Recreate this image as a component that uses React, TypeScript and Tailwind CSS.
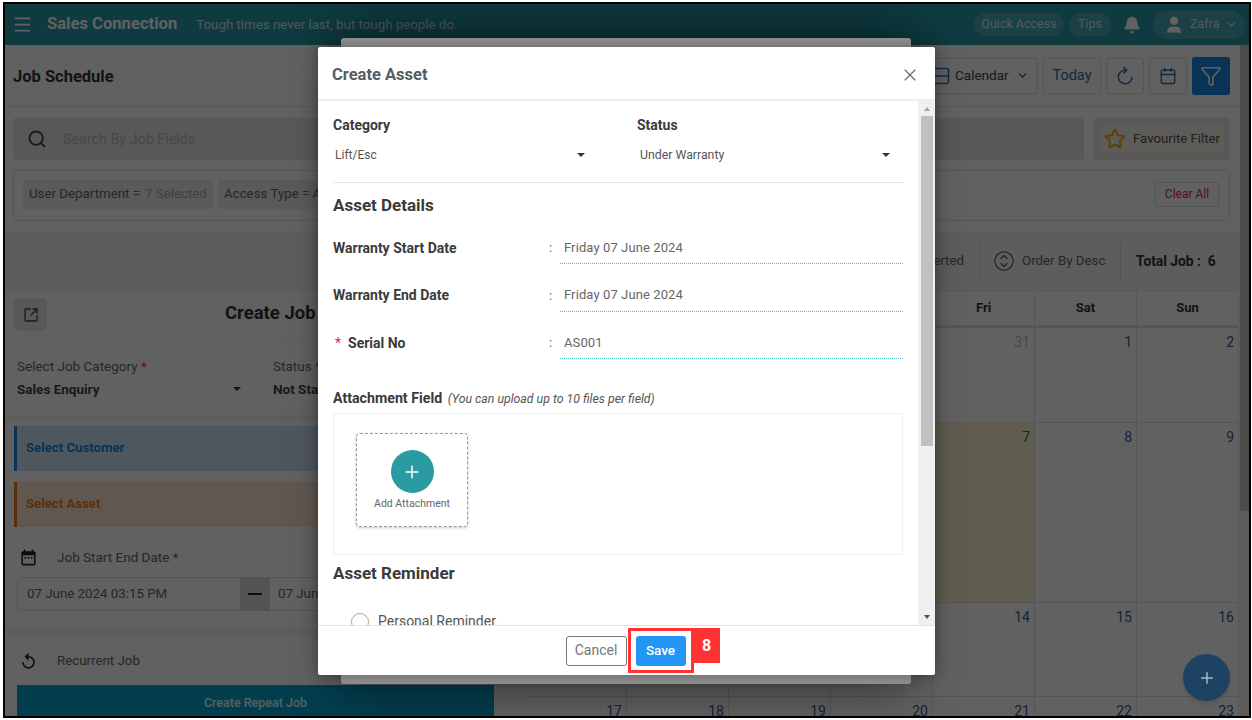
import { Bell, Calendar as CalendarIcon, ChevronDown, Filter, Menu, Plus, Rows2, Search, SquareArrowOutUpRight, Star, User, X } from 'lucide-react';

const font = { fontFamily: 'Roboto, "Liberation Sans", sans-serif' };

function Caret() {
  return <span className="w-0 h-0 border-x-[4px] border-x-transparent border-t-[4px] border-t-[#333]" />;
}

function DetailRow({ label, value, required }: { label: string; value: string; required?: boolean }) {
  return (
    <div className="flex h-[47.5px] items-start pt-[5px]">
      <div className="w-[216px] text-[14px] font-bold text-[#3a3a3a] flex items-center h-[24px] shrink-0">
        {required && <span className="text-[#e0245e] font-normal mr-[7px] ml-[2px]">*</span>}
        {label}
      </div>
      <div className="w-[11px] text-[#555] text-[13px] h-[24px] flex items-center shrink-0">:</div>
      <div className="flex-1 h-[28px] pl-[4px] pb-[4px] text-[13px] text-[#666] border-b border-dotted border-[#4fc0cc] flex items-center tracking-[0.1px]">{value}</div>
    </div>
  );
}

function CreateAssetModal() {
  return (
    <div className="absolute left-[318px] top-[47px] w-[617px] h-[628px] bg-white rounded-[2px] shadow-[0_0_14px_rgba(0,0,0,0.35)] flex flex-col">
      <div className="h-[54px] shrink-0 border-b-2 border-[#eee] flex items-center justify-between pl-[14px] pr-[15px] pt-[4px]">
        <span className="text-[16.5px] font-bold text-[#555c63]">Create Asset</span>
        <X size={20} strokeWidth={1.4} className="text-[#606a75]" />
      </div>
      <div className="flex-1 flex min-h-0">
        <div className="flex-1 min-w-0 overflow-hidden pl-[15px] pr-[15px]">
          <div className="h-[82px] border-b border-[#e5e5e5] grid grid-cols-2 gap-[0px]">
            <div className="pt-[15px] w-[252px]">
              <div className="text-[14px] font-bold text-[#3a3a3a] leading-[18px]">Category</div>
              <div className="mt-[12px] flex justify-between items-center pl-[2px] text-[12px] text-[#555]">
                Lift/Esc
                <Caret />
              </div>
            </div>
            <div className="pt-[15px] ml-[19px] w-[253px]">
              <div className="text-[14px] font-bold text-[#3a3a3a] leading-[18px]">Status</div>
              <div className="mt-[12px] flex justify-between items-center pl-[3px] text-[12.3px] text-[#555]">
                Under Warranty
                <Caret />
              </div>
            </div>
          </div>
          <div className="text-[17px] font-bold text-[#3a3a3a] mt-[11px] leading-[22px]">Asset Details</div>
          <div className="mt-[15px]">
            <DetailRow label="Warranty Start Date" value="Friday 07 June 2024" />
            <DetailRow label="Warranty End Date" value="Friday 07 June 2024" />
            <DetailRow label="Serial No" value="AS001" required />
          </div>
          <div className="mt-[15px] text-[14.2px] font-bold text-[#3a3a3a] leading-[18px]">
            Attachment Field <span className="text-[12.3px] italic font-normal text-[#555] ml-[2px]">(You can upload up to 10 files per field)</span>
          </div>
          <div className="mt-[5.5px] h-[142px] border border-[#eee] pt-[19px] pl-[22px]">
            <div className="w-[112px] h-[94px] border border-dashed border-[#999] rounded-[4px] shadow-[0_1px_3px_rgba(0,0,0,0.2)] flex flex-col items-center pt-[16px]">
              <div className="w-[43px] h-[43px] rounded-full bg-[#2a9aa3] flex items-center justify-center">
                <Plus size={20} strokeWidth={1.8} className="text-white" />
              </div>
              <div className="text-[10.5px] text-[#666] mt-[4px] leading-[14px]">Add Attachment</div>
            </div>
          </div>
          <div className="text-[17px] font-bold text-[#3a3a3a] mt-[7px] leading-[22px]">Asset Reminder</div>
          <div className="mt-[27px] flex items-center ml-[18px] gap-[9px]">
            <span className="w-[18px] h-[18px] rounded-full border border-[#aaa] shrink-0" />
            <span className="text-[14px] text-[#555]">Personal Reminder</span>
          </div>
        </div>
        <div className="w-[17px] shrink-0 bg-[#f0f0f0] flex flex-col items-center relative">
          <span className="mt-[6px] w-0 h-0 border-x-[3.5px] border-x-transparent border-b-[4px] border-b-[#a3a3a3]" />
          <div className="mt-[5px] w-[12px] h-[330px] bg-[#c0c0c0]" />
          <span className="absolute bottom-[6px] w-0 h-0 border-x-[3.5px] border-x-transparent border-t-[4px] border-t-[#505050]" />
        </div>
      </div>
      <div className="h-[50px] shrink-0 border-t border-[#e3e3e3] flex items-center justify-center gap-[9px] pr-[2px]">
        <button className="w-[61px] h-[30px] rounded-[3px] border border-[#777] text-[14px] text-[#777] bg-white">Cancel</button>
        <button className="w-[50px] h-[30px] rounded-[3px] bg-[#2196f3] text-[13.5px] font-medium text-white">Save</button>
      </div>
      {/* annotation on the screenshot */}
      <div className="absolute left-[310px] top-[581px] w-[66px] h-[45px] border-[3px] border-[#ff3333]" />
      <div className="absolute left-[375px] top-[581px] w-[27px] h-[35px] bg-[#ff3333] text-white font-bold text-[16px] flex items-center justify-center">8</div>
    </div>
  );
}

function Toolbar() {
  return (
    <div className="h-[62px] shrink-0 border-b border-[#e6e6e6] flex items-center pl-[8px] pr-[10px] justify-between">
      <span className="text-[16.5px] font-bold text-[#333] pt-[3px]">Job Schedule</span>
      <div className="flex items-center gap-[5px]">
        <div className="h-[36px] w-[108px] rounded-[3px] border border-[#ddd] flex items-center gap-[4px] text-[13.5px] text-[#444]">
          <Rows2 size={20} strokeWidth={1.8} className="text-[#2b6cb0]" />
          <span>Calendar</span>
          <ChevronDown size={13} className="ml-[3px]" />
        </div>
        <div className="h-[36px] w-[58px] rounded-[3px] border border-[#ddd] flex items-center justify-center text-[14.5px] text-[#2b6cb0]">Today</div>
        <div className="h-[36px] w-[38px] rounded-[3px] border border-[#ddd] flex items-center justify-center text-[#2b6cb0]">
          <svg width="20" height="20" viewBox="0 0 24 24" fill="none" stroke="currentColor" strokeWidth="1.8" strokeLinecap="round" strokeLinejoin="round">
            <path d="M13 5a8.2 8.2 0 1 0 7.4 8.5" />
            <path d="M10.5 1.5 14 5l-3.5 3.5" />
          </svg>
        </div>
        <div className="h-[36px] w-[38px] rounded-[3px] border border-[#ddd] flex items-center justify-center text-[#2b6cb0]"><CalendarIcon size={18} strokeWidth={1.8} /></div>
        <div className="h-[38px] w-[38px] rounded-[3px] bg-[#1583e3] flex items-center justify-center text-white"><Filter size={22} strokeWidth={1.8} /></div>
      </div>
    </div>
  );
}

function JobForm() {
  return (
    <div className="w-[505px] shrink-0 h-full">
      <div className="h-[49px] border-b border-[#eee] flex items-start pt-[7px] pl-[9px] relative">
        <div className="w-[33px] h-[33px] rounded-[5px] bg-[#e6e6e6] flex items-center justify-center text-[#444]"><SquareArrowOutUpRight size={16} /></div>
        <span className="absolute left-[220px] top-[9px] text-[18.5px] font-bold text-[#333]">Create Job</span>
      </div>
      <div className="h-[81px] border-b-[6px] border-[#f3f3f3] flex pl-[12px] pt-[16px]">
        <div className="w-[256px]">
          <div className="text-[13.5px] text-[#666] leading-[20px]">Select Job Category <span className="text-[#e53935]">*</span></div>
          <div className="flex items-center justify-between w-[224px] text-[13.5px] font-bold text-[#444] mt-[3px]">
            Sales Enquiry <Caret />
          </div>
        </div>
        <div>
          <div className="text-[13.5px] text-[#666] leading-[20px]">Status <span className="text-[#e53935]">*</span></div>
          <div className="text-[13.5px] font-bold text-[#444] mt-[3px]">Not Started</div>
        </div>
      </div>
      <div className="pl-[9px] pr-[11px] pt-[5px]">
        <div className="h-[45px] border-l-[3px] border-[#1583e3] bg-[#cfe4f7] flex items-center pl-[9px] pb-[2px] text-[13.2px] font-bold text-[#1a86d9]">Select Customer</div>
        <div className="h-[45px] mt-[11px] border-l-[3px] border-[#f07a1c] bg-[#fbe6d3] flex items-center pl-[9px] pb-[2px] text-[13.2px] font-bold text-[#ee7a1a]">Select Asset</div>
      </div>
      <div className="mt-[18px] pl-[14px] flex items-center gap-[19px] h-[24px] text-[13.5px] text-[#666]">
        <svg width="19" height="19" viewBox="0 0 24 24" fill="#222">
          <path d="M19 4h-1V2h-2v2H8V2H6v2H5c-1.1 0-2 .9-2 2v14c0 1.1.9 2 2 2h14c1.1 0 2-.9 2-2V6c0-1.1-.9-2-2-2zm0 16H5V9h14v11z" />
          <path d="M7 11.5h2v2H7zm4 0h2v2h-2zm4 0h2v2h-2z" />
        </svg>
        <span>Job Start End Date <span className="text-[#e53935]">*</span></span>
      </div>
      <div className="mt-[8px] ml-[12px] w-[477px] h-[34px] rounded-[5px] border border-[#d8dde6] flex text-[13.3px] text-[#666] overflow-hidden">
        <div className="w-[222px] flex items-center pl-[9px]">07 June 2024 03:15 PM</div>
        <div className="w-[30px] bg-[#ddd] flex items-center justify-center">
          <span className="w-[14px] h-[2px] bg-[#222]" />
        </div>
        <div className="flex-1 flex items-center pl-[8px]">07 June 2024 04:15 PM</div>
      </div>
      <div className="mt-[17px] h-[6px] bg-[#f3f3f3]" />
      <div className="mt-[15px] pl-[14px] flex items-center gap-[19px] h-[24px] text-[13.3px] text-[#666]">
        <svg width="19" height="19" viewBox="0 0 24 24" fill="#222">
          <path d="M12 5V1L7 6l5 5V7c3.31 0 6 2.69 6 6s-2.69 6-6 6-6-2.69-6-6H4c0 4.42 3.58 8 8 8s8-3.58 8-8-3.58-8-8-8z" />
        </svg>
        <span>Recurrent Job</span>
      </div>
      <div className="mt-[12px] ml-[12px] w-[477px] h-[36px] bg-[#0aa4cf] flex items-center justify-center text-[12.5px] font-medium text-[#dff]">Create Repeat Job</div>
    </div>
  );
}

function Calendar() {
  const rows = [
    { h: 'h-[95px]', days: ['27', '28', '29', '30', '31', '1', '2'], muted: 5 },
    { h: 'h-[180px]', days: ['3', '4', '5', '6', '7', '8', '9'], muted: 0 },
    { h: 'h-[94px]', days: ['10', '11', '12', '13', '14', '15', '16'], muted: 0 },
    { h: 'h-[94px]', days: ['17', '18', '19', '20', '21', '22', '23'], muted: 0 },
  ];
  return (
    <div className="flex-1 min-w-0 pl-[15px] pr-[1px]">
      <div className="grid grid-cols-7 h-[37px] border-b-[3px] border-[#e3e3e3] border-t border-t-[#eee] text-[13px] font-bold text-[#333]">
        {['Mon', 'Tue', 'Wed', 'Thu', 'Fri', 'Sat', 'Sun'].map((d) => (
          <div key={d} className="flex items-center justify-center border-r border-[#e3e3e3] pb-[2px]">{d}</div>
        ))}
      </div>
      {rows.map((r, i) => (
        <div key={i} className={`grid grid-cols-7 border-b border-[#e3e3e3] ${r.h}`}>
          {r.days.map((d, j) => (
            <div key={d} className={`border-r border-[#e3e3e3] text-right pr-[4px] pt-[4px] text-[14px] ${j < r.muted ? 'text-[#b9c3cf]' : 'text-[#2f5f95]'} ${d === '7' ? 'bg-[#fcf3cf]' : ''}`}>{d}</div>
          ))}
        </div>
      ))}
    </div>
  );
}

export default function App() {
  return (
    <div style={font} className="w-[1252px] h-[720px] bg-white pt-[2px] pb-[2px] pl-[3px] pr-[1px] overflow-hidden">
      <div className="relative w-full h-full border-2 border-black bg-white overflow-hidden flex flex-col">
        <header className="h-[41px] shrink-0 bg-[#2799a8] text-white flex items-center pl-[7px] pr-[4px]">
          <Menu size={21} />
          <span className="ml-[14px] text-[16.6px] font-bold">Sales Connection</span>
          <span className="ml-[19px] text-[13.3px] text-[#cfe9ec]">Tough times never last, but tough people do.</span>
          <div className="ml-auto flex items-center gap-[5px] text-[12.5px] text-[#d5eef0]">
            <span className="h-[23px] w-[90px] rounded-full bg-white/15 flex items-center justify-center">Quick Access</span>
            <span className="h-[23px] w-[42px] rounded-full bg-white/15 flex items-center justify-center">Tips</span>
            <Bell size={18} fill="currentColor" className="mx-[7px] text-white" />
            <span className="h-[28px] w-[92px] rounded-full bg-white/15 flex items-center pl-[11px] gap-[6px]">
              <User size={20} fill="currentColor" className="text-white" /> Zafra <ChevronDown size={13} />
            </span>
          </div>
        </header>
        <div className="flex-1 min-h-0 flex">
          <div className="flex-1 min-w-0 flex flex-col">
            <Toolbar />
            <div className="h-[63px] shrink-0 flex items-start pt-[11px] gap-[10px] pl-[8px] pr-[10px]">
              <div className="flex-1 h-[42px] rounded-[3px] bg-[#e7e7e7] flex items-center pl-[14px] gap-[16px] text-[14.3px] text-[#bbb]">
                <Search size={20} strokeWidth={2.2} className="text-[#444]" />
                <span className="pt-[1px]">Search By Job Fields</span>
              </div>
              <div className="w-[136px] h-[42px] rounded-[3px] bg-[#e7e7e7] flex items-center justify-center">
                <div className="h-[28px] px-[4px] bg-[#f3f1e8] flex items-center gap-[7px] text-[13.2px] text-[#555]">
                  <Star size={22} strokeWidth={2.4} className="text-[#f5ac1e]" /> Favourite Filter
                </div>
              </div>
            </div>
            <div className="ml-[8px] mr-[10px] h-[51px] shrink-0 rounded-[3px] border border-[#e3e3e3] flex items-center pl-[9px] pr-[10px] pb-[3px] gap-[5px] text-[13.3px] text-[#666]">
              <span className="h-[29px] w-[190px] px-[6px] rounded-[2px] bg-[#ececec] flex items-center whitespace-nowrap">User Department =<span className="ml-[5px] text-[#aaa]">7 Selected</span></span>
              <span className="h-[29px] px-[6px] rounded-[2px] bg-[#ececec] flex items-center">Access Type = All</span>
              <span className="ml-auto h-[25px] w-[64px] border border-[#ddd] rounded-[2px] text-[12px] text-[#dc2a55] flex items-center justify-center">Clear All</span>
            </div>
            <div className="h-[59px] mt-[11px] shrink-0 bg-[#f3f3f3] border-b border-[#eee] flex items-center justify-end pr-[13px] text-[13.3px] text-[#666]">
              <span className="pr-[15px]">Inverted</span>
              <span className="h-[38px] w-px bg-[#ddd]" />
              <span className="flex items-center gap-[8px] w-[140px] pl-[14px]">
                <svg width="20" height="20" viewBox="0 0 20 20" fill="none" stroke="#555" strokeWidth="1.1" strokeLinecap="round" strokeLinejoin="round">
                  <circle cx="10" cy="10" r="9.2" />
                  <path d="M7 7.5 10 4.5l3 3" />
                  <path d="M7 12.5l3 3 3-3" />
                </svg>
                Order By Desc
              </span>
              <span className="h-[38px] w-px bg-[#ddd]" />
              <span className="pl-[15px] text-[13.8px] font-bold text-[#333] w-[106px]">Total Job :&nbsp;&nbsp;6</span>
            </div>
            <div className="flex-1 min-h-0 flex overflow-hidden">
              <JobForm />
              <Calendar />
            </div>
          </div>
          <div className="w-[9px] shrink-0 bg-[#f1f1f1] relative">
            <div className="h-[466px] bg-[#c8c8c8]" />
          </div>
        </div>
        {/* backdrop */}
        <div className="absolute inset-0 bg-black/[0.62]" />
        <div className="absolute right-[19px] bottom-[15px] w-[47px] h-[47px] rounded-full bg-[#1d4263] shadow-md flex items-center justify-center text-[#a8b8c4]">
          <Plus size={18} />
        </div>
        <div className="absolute left-[336px] top-[34px] w-[570px] h-[646px] rounded-[3px] bg-[#929292] shadow-[0_0_50px_rgba(0,0,0,0.6)]" />
        <div className="absolute -left-[5px] -top-[4px]">
          <CreateAssetModal />
        </div>
      </div>
    </div>
  );
}
